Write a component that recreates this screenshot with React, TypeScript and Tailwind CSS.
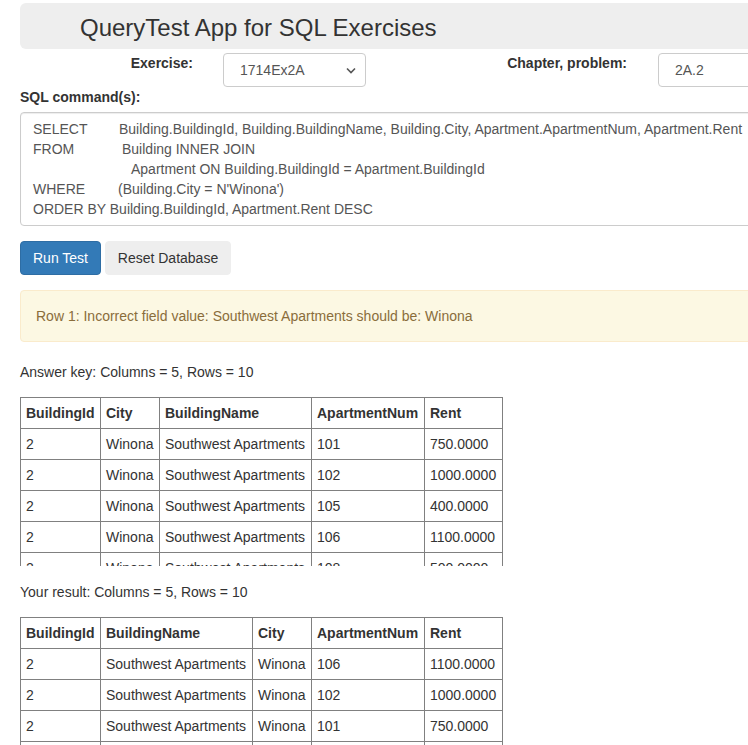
import React from "react";

/* QueryTest page: header band, exercise pickers, SQL box, actions,
   warning alert and the two result tables (answer key + your result). */

type Row = string[];

const W: Record<string, string> = {
  BuildingId: "w-[80px]",
  City: "w-[59px]",
  BuildingName: "w-[152px]",
  ApartmentNum: "w-[113px]",
  Rent: "w-[78px]",
};

const keyCols = ["BuildingId", "City", "BuildingName", "ApartmentNum", "Rent"];
const keyRows: Row[] = [
  ["2", "Winona", "Southwest Apartments", "101", "750.0000"],
  ["2", "Winona", "Southwest Apartments", "102", "1000.0000"],
  ["2", "Winona", "Southwest Apartments", "105", "400.0000"],
  ["2", "Winona", "Southwest Apartments", "106", "1100.0000"],
  ["2", "Winona", "Southwest Apartments", "108", "500.0000"],
  ["3", "Winona", "Deerfield Apartments", "201", "900.0000"],
];

const yourCols = ["BuildingId", "BuildingName", "City", "ApartmentNum", "Rent"];
const yourRows: Row[] = [
  ["2", "Southwest Apartments", "Winona", "106", "1100.0000"],
  ["2", "Southwest Apartments", "Winona", "102", "1000.0000"],
  ["2", "Southwest Apartments", "Winona", "101", "750.0000"],
  ["2", "Southwest Apartments", "Winona", "108", "500.0000"],
];

function ResultTable({ cols, rows }: { cols: string[]; rows: Row[] }) {
  return (
    <table className="w-[483px] table-fixed border-collapse">
      <colgroup>
        {cols.map((c) => (
          <col key={c} className={W[c]} />
        ))}
      </colgroup>
      <thead>
        <tr>
          {cols.map((c) => (
            <th key={c} className="border border-[#808080] px-[5px] py-[5px] text-left font-bold whitespace-nowrap">
              {c}
            </th>
          ))}
        </tr>
      </thead>
      <tbody>
        {rows.map((r, i) => (
          <tr key={i}>
            {r.map((v, j) => (
              <td key={j} className="border border-[#808080] px-[5px] py-[5px] whitespace-nowrap">
                {v}
              </td>
            ))}
          </tr>
        ))}
      </tbody>
    </table>
  );
}

function SqlLine({ kw, pad, text }: { kw: string; pad: number; text: string }) {
  return (
    <div className="flex whitespace-pre">
      <span className="shrink-0" style={{ width: pad }}>
        {kw}
      </span>
      <span>{text}</span>
    </div>
  );
}

export default function App() {
  return (
    <div className="h-[745px] w-[748px] overflow-hidden bg-white font-['Liberation_Sans',Arial,sans-serif] text-[14px] leading-[20px] text-[#333]">
      <div className="w-[830px] pl-[20px] pt-[3px]">
        <div className="h-[46px] rounded-[6px] bg-[#eee] pl-[60px] pt-[12px]">
          <h1 className="text-[24px] leading-[26.4px] font-normal">QueryTest App for SQL Exercises</h1>
        </div>

        <div className="mt-[4px] flex items-start">
          <div className="w-[173px] text-right font-bold">Exercise:</div>
          <div className="ml-[30px] flex h-[34px] w-[143px] items-center justify-between rounded-[4px] border border-[#ccc] pl-[16px] pr-[9px] text-[#555]">
            <span>1714Ex2A</span>
            <svg width="10" height="7" viewBox="0 0 10 7" fill="none">
              <path d="M1 1.5l4 4 4-4" stroke="#555" strokeWidth="1.6" />
            </svg>
          </div>
          <div className="w-[261px] text-right font-bold">Chapter, problem:</div>
          <div className="ml-[31px] flex h-[34px] w-[143px] items-center rounded-[4px] border border-[#ccc] pl-[16px] text-[#555]">
            2A.2
          </div>
        </div>

        <div className="mb-[5px] font-bold">SQL command(s):</div>
        <div className="h-[114px] rounded-[4px] border border-[#ccc] px-[12px] py-[6px] text-[#555] shadow-[inset_0_1px_1px_rgba(0,0,0,0.075)]">
          <SqlLine
            kw="SELECT"
            pad={86}
            text="Building.BuildingId, Building.BuildingName, Building.City, Apartment.ApartmentNum, Apartment.Rent"
          />
          <SqlLine kw="FROM" pad={89} text="Building INNER JOIN" />
          <SqlLine kw="" pad={98} text="Apartment ON Building.BuildingId = Apartment.BuildingId" />
          <SqlLine kw="WHERE" pad={85} text="(Building.City = N'Winona')" />
          <div className="whitespace-pre">ORDER BY Building.BuildingId, Apartment.Rent DESC</div>
        </div>

        <div className="mt-[15px] flex gap-[4px]">
          <button
            type="button"
            className="h-[34px] w-[81px] rounded-[4px] border border-[#2e6da4] bg-[#337ab7] text-white"
          >
            Run Test
          </button>
          <button
            type="button"
            className="h-[34px] w-[126px] rounded-[4px] border border-[#eee] bg-[#eee] text-[#333]"
          >
            Reset Database
          </button>
        </div>

        <div className="mt-[15px] rounded-[4px] border border-[#faebcc] bg-[#fcf8e3] p-[15px] text-[#8a6d3b]">
          Row 1: Incorrect field value: Southwest Apartments should be: Winona
        </div>

        <div className="mt-[20px]">Answer key: Columns = 5, Rows = 10</div>
        <div className="mt-[15px] h-[169px] overflow-hidden">
          <ResultTable cols={keyCols} rows={keyRows} />
        </div>

        <div className="mt-[16px]">Your result: Columns = 5, Rows = 10</div>
        <div className="mt-[15px]">
          <ResultTable cols={yourCols} rows={yourRows} />
        </div>
      </div>
    </div>
  );
}
